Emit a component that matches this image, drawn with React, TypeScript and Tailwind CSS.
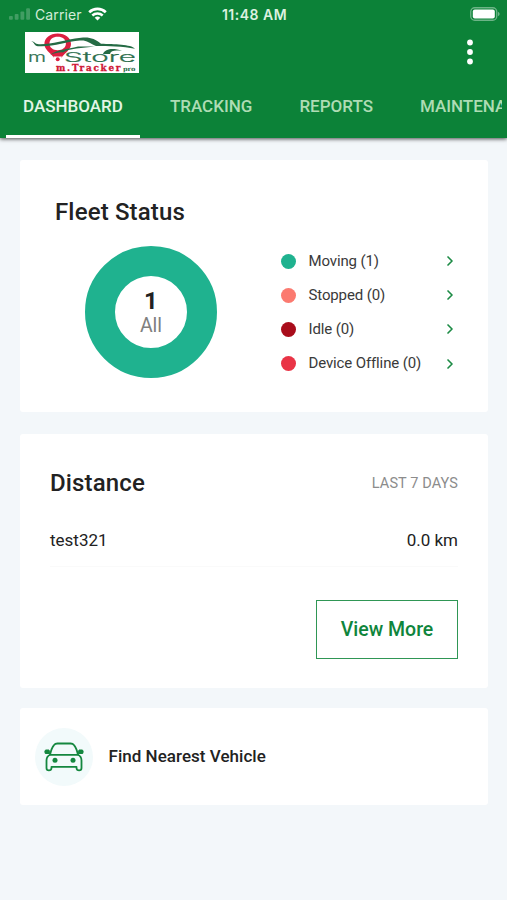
import React from 'react';
import { ChevronRight } from 'lucide-react';

interface FleetStatus {
  label: string;
  count: number;
  dot: string;
}

const statuses: FleetStatus[] = [
  { label: 'Moving', count: 1, dot: 'bg-[#1fb28f]' },
  { label: 'Stopped', count: 0, dot: 'bg-[#fb7a70]' },
  { label: 'Idle', count: 0, dot: 'bg-[#a90d1b]' },
  { label: 'Device Offline', count: 0, dot: 'bg-[#e93446]' },
];

const tabs = ['DASHBOARD', 'TRACKING', 'REPORTS', 'MAINTENANCE'];

function StatusBar() {
  return (
    <div className="flex h-7 items-center justify-between pl-[9px] pr-[7px] font-['Inter',sans-serif] text-white">
      <div className="flex flex-1 items-center">
        <svg className="h-3 w-[21px]" viewBox="0 0 22 12" fill="#fff" fillOpacity="0.22">
          <rect x="0" y="8" width="4" height="4" rx="1" />
          <rect x="6" y="6" width="4" height="6" rx="1" />
          <rect x="12" y="3.5" width="4" height="8.5" rx="1" />
          <rect x="18" y="0" width="4" height="12" rx="1" />
        </svg>
        <span className="ml-[5px] text-[14px] tracking-[0.1px] text-[#d4ecd9]">Carrier</span>
        <svg className="ml-[6px] h-[14px] w-[19px]" viewBox="0 0 19 14" fill="none" stroke="#fff">
          <path d="M1.2 5.2a12 12 0 0 1 16.6 0" strokeWidth="2.7" />
          <path d="M4.3 8.5a7.6 7.6 0 0 1 10.4 0" strokeWidth="2.5" />
          <path d="M9.5 13.6 6.7 10.8a4.2 4.2 0 0 1 5.6 0z" fill="#fff" stroke="none" />
        </svg>
      </div>
      <span className="text-[14px] font-semibold tracking-[0.5px] text-[#dcf1e0]">11:48 AM</span>
      <div className="flex flex-1 justify-end">
        <svg className="-mt-[1px] h-[14px] w-[30px]" viewBox="0 0 30 14">
          <rect x="0.75" y="0.75" width="26" height="12.5" rx="4" fill="none" stroke="#fff" strokeOpacity="0.4" strokeWidth="1.3" />
          <rect x="2.8" y="2.6" width="22" height="8.8" rx="2" fill="#fff" />
          <path d="M28.2 4.8c1.8.8 1.8 3.6 0 4.4z" fill="#fff" fillOpacity="0.5" />
        </svg>
      </div>
    </div>
  );
}

function Logo() {
  return (
    <svg className="h-[41px] w-[114px] bg-white" viewBox="0 0 114 41">
      <path
        fillRule="evenodd"
        fill="#dc1f40"
        d="M32.7 1.5c7.6 0 13.3 4.2 13.3 10.5 0 5.5-5.5 8.5-9.5 13.5h-7.6c-4-5-9.5-8-9.5-13.5 0-6.3 5.7-10.5 13.3-10.5zM32.7 4.8c-4.8 0-8.2 2.7-8.2 6.7s3.4 6.7 8.2 6.700 8.2-2.7 8.2-6.700-3.400-6.700-8.200-6.700z"
      />
      <path d="M28.5 24.5h8.4l-2.200 4.300h-4z" fill="#fff" />
      <circle cx="32.7" cy="27.3" r="2" fill="#dc1f40" />
      <path
        d="M6 9c3 0 4 3.2 8 3.2 13 .3 25-4.400 42-6.400 9-1 14 1.200 20 6 13 .4 30 .4 34 5-12-2.800-27-2.600-39-2.800C64 11 62 8 55 8.500c-14 1-27 6.800-42 5.700-4-.3-3.500-4-7-5.200z"
        fill="#256b45"
      />
      <path d="M25 23c8-6 17-5.500 28-8.500h17c-12 1.500-27 2-32 6-3-.5-8 .5-13 2.500zM78 22c2-5 10-6.500 19-3-7-1-11-.5-12 3z" fill="#256b45" />
      <g fontFamily="Inter, sans-serif" fontWeight="300" fontSize="13.5" fill="#2c6e4c" stroke="#2c6e4c" strokeWidth="0.2">
        <text x="3" y="29.5" textLength="18" lengthAdjust="spacingAndGlyphs">m</text>
        <text x="39" y="29.5" textLength="72" lengthAdjust="spacingAndGlyphs">Store</text>
      </g>
      <text x="31" y="38.5" fill="#cf1736" stroke="#cf1736" strokeWidth="0.3" fontFamily="'DejaVu Serif Condensed', 'DejaVu Serif', serif" fontWeight="700" fontSize="9.8" textLength="64.5">
        m.Tracker
      </text>
      <text x="98" y="38.5" fill="#256b45" fontFamily="'DejaVu Serif', serif" fontWeight="700" fontSize="6" textLength="12.5" lengthAdjust="spacingAndGlyphs">
        pro
      </text>
    </svg>
  );
}

function Header() {
  return (
    <header className="relative h-[138px] bg-[#0c8238] shadow-[0_1px_4px_rgba(0,0,0,0.7)]">
      <StatusBar />
      <div className="flex h-[48px] items-center justify-between pl-[25px] pr-[31px]">
        <Logo />
        <button aria-label="More options">
          <svg className="h-[26px] w-[12px]" viewBox="0 0 12 26" fill="#fff">
            <circle cx="6" cy="3.5" r="2.9" />
            <circle cx="6" cy="13" r="2.9" />
            <circle cx="6" cy="22.5" r="2.9" />
          </svg>
        </button>
      </div>
      <nav className="ml-[6px] mr-[5px] flex h-[62px] overflow-hidden">
        {tabs.map((tab, i) => (
          <button
            key={tab}
            className={
              i === 0
                ? 'h-full shrink-0 border-b-[3px] border-white px-[17px] pt-[2px] text-[17px] font-medium text-[#e2f5e5]'
                : 'h-full shrink-0 border-b-[3px] border-transparent pl-[30px] pr-[17px] pt-[2px] text-[17px] font-medium text-[#aedcb4]'
            }
          >
            {tab}
          </button>
        ))}
      </nav>
    </header>
  );
}

function FleetCard() {
  return (
    <section className="h-[252px] rounded-[3px] bg-white px-[35px] pt-[36px]">
      <h2 className="text-[24px] leading-8 font-medium tracking-[0.15px]">Fleet Status</h2>
      <div className="mt-[18px] flex">
        <div className="ml-[30px] flex size-[132px] flex-col items-center justify-center rounded-full border-[30px] border-[#1fb28f] pt-[2px]">
          <span className="text-[24px] leading-[26px] font-bold">1</span>
          <span className="text-[19.5px] leading-[24px] text-[#808080]">All</span>
        </div>
        <ul className="-mt-[2px] ml-[64px] flex-1">
          {statuses.map((status) => (
            <li key={status.label} className="flex h-[34.2px] items-center text-[15px] tracking-[-0.13px] text-[#3a3a3a]">
              <span className={`mr-[12.5px] size-[15px] rounded-full ${status.dot}`} />
              {status.label} ({status.count})
              <ChevronRight className="-mr-[5px] ml-auto size-4 text-[#1c8b45]" strokeWidth={2.5} />
            </li>
          ))}
        </ul>
      </div>
    </section>
  );
}

function DistanceCard() {
  return (
    <section className="h-[254px] rounded-[3px] bg-white px-[30px] pt-[33px]">
      <div className="flex items-center justify-between">
        <h2 className="text-[24px] leading-8 font-medium tracking-[0.15px]">Distance</h2>
        <span className="pt-[1px] text-[14.5px] tracking-[0.1px] text-[#8c8c8c]">LAST 7 DAYS</span>
      </div>
      <div className="mt-[28px] flex h-[40px] justify-between border-b border-[#fafafa] pt-[1px] text-[17px] leading-6">
        <span>test321</span>
        <span>0.0 km</span>
      </div>
      <div className="mt-[33px] flex justify-end">
        <button className="h-[59px] w-[142px] border border-[#2f9655] pt-[1px] text-[19.5px] font-medium text-[#0f853c]">
          View More
        </button>
      </div>
    </section>
  );
}

function CarIcon() {
  return (
    <svg className="h-[30px] w-[40px]" viewBox="0 0 40 30" fill="none" stroke="#14873f" strokeWidth="1.8" strokeLinejoin="round">
      <path d="M6 12.8Q7.5 6 9.8 3.3 11.2 1.5 13.5 1.5h13q2.3 0 3.7 1.8Q32.5 6 34 12.8z" />
      <path d="M6 12.8Q2.5 14.5 2.5 18.5V26q0 2.4 2.4 2.4T7.5 26v-1.200h25V26q.2 2.400 2.600 2.400t2.400-2.400v-7.500q0-4-3.500-5.700" />
      <path d="M1.5 8H5l.8 3.500H1.300Q.2 9.500 1.500 8zM38.500 8H35l-.8 3.500h4.500q1.100-2-.2-3.500z" fill="#14873f" strokeWidth="1" />
      <circle cx="11" cy="18.3" r="2.5" fill="#14873f" stroke="none" />
      <circle cx="29" cy="18.3" r="2.5" fill="#14873f" stroke="none" />
    </svg>
  );
}

function App() {
  return (
    <div className="h-[900px] w-[507px] overflow-hidden bg-[#f3f7fa] font-['Roboto',sans-serif] text-[#222]">
      <Header />
      <main className="flex flex-col px-5 pr-[19px] pt-[22px]">
        <FleetCard />
        <div className="mt-[22px]">
          <DistanceCard />
        </div>
        <section className="mt-5 flex h-[97px] items-center rounded-[3px] bg-white pl-[15px]">
          <div className="flex size-[58px] items-center justify-center rounded-full bg-[#f2fafb]">
            <CarIcon />
          </div>
          <span className="ml-[15.5px] text-[17px] font-medium tracking-[0.03px]">Find Nearest Vehicle</span>
        </section>
      </main>
    </div>
  );
}

export default App;
